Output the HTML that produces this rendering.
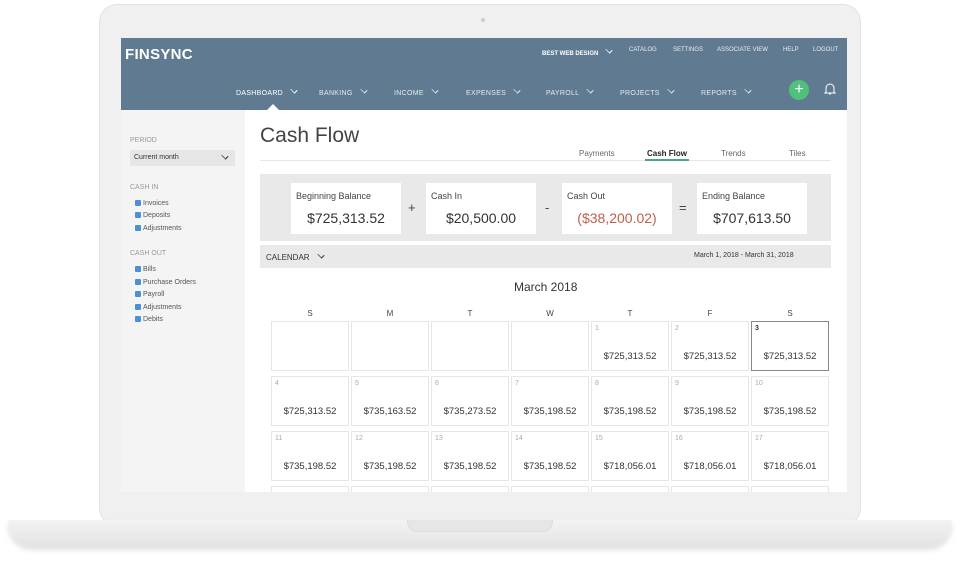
<!DOCTYPE html>
<html><head><style>
*{margin:0;padding:0;box-sizing:border-box}
body{width:960px;height:574px;background:#fff;position:relative;overflow:hidden;font-family:"Liberation Sans",sans-serif;color:#333}
.abs{position:absolute}
.lid{left:99px;top:4px;width:762px;height:522px;background:#f0f0f0;border:1px solid #e2e2e2;border-radius:18px}
.base{left:8px;top:520px;width:944px;height:26px;background:linear-gradient(#f3f3f3,#e4e4e4);border-radius:3px 3px 40px 40px;box-shadow:0 4px 6px rgba(0,0,0,.12)}
.notch{left:407px;top:520px;width:146px;height:12px;background:#e6e6e6;border-radius:0 0 10px 10px;border:1px solid #ddd;border-top:none}
.screen{left:121px;top:38px;width:726px;height:454px;background:#fff;overflow:hidden}
.hdr{left:0;top:0;width:726px;height:72px;background:#607b91;color:#fff}
.logo{left:4px;top:8px;font-weight:bold;font-size:15px;letter-spacing:.3px}
.top{top:9px;font-size:6px;color:#e8eef3}
.nav{top:49px;font-size:7px;color:#e3eaf0;letter-spacing:.3px}
.ch{display:inline-block;width:6px;height:6px;border-right:1px solid currentColor;border-bottom:1px solid currentColor;transform:rotate(45deg) scaleY(.7);margin-left:8px;vertical-align:2px}
.side{left:0;top:72px;width:124px;height:382px;background:#f4f4f4}
.sl{font-size:7px;color:#999}
.cb{font-size:7px;color:#555;left:14px}
.cb:before{content:"";display:inline-block;width:6px;height:6px;background:#4a90d9;border-radius:1px;margin-right:2px;vertical-align:-1px}
.box{background:#fff;height:51px;top:145px}
.box .t{position:absolute;left:5px;top:8px;font-size:9px;color:#444}
.box .v{position:absolute;left:0;right:0;top:27px;text-align:center;font-size:14px;color:#333}
.op{top:162px;font-size:13px;color:#444}
.cell{width:78px;height:50px;border:1px solid #e6e6e6;background:#fff}
.cell .d{position:absolute;left:3px;top:3px;font-size:7px;color:#aaa}
.cell .a{position:absolute;left:0;right:0;top:29px;text-align:center;font-size:9.5px;color:#333}
.dow{top:271px;width:78px;text-align:center;font-size:8px;color:#444}
</style></head><body>
<div class="abs lid"></div>
<div class="abs" style="left:481px;top:18px;width:4px;height:4px;border-radius:2px;background:#ccc"></div>
<div class="abs base"></div>
<div class="abs notch"></div>
<div class="abs screen">
 <div class="abs hdr">
  <div class="abs logo">FINSYNC</div>
  <div class="abs top" style="left:421px;font-weight:bold;color:#fff">BEST WEB DESIGN<span class="ch"></span></div>
  <div class="abs top" style="left:508px">CATALOG</div>
  <div class="abs top" style="left:552px">SETTINGS</div>
  <div class="abs top" style="left:596px">ASSOCIATE VIEW</div>
  <div class="abs top" style="left:662px">HELP</div>
  <div class="abs top" style="left:692px">LOGOUT</div>
  <div class="abs nav" style="left:115px;color:#fff">DASHBOARD<span class="ch"></span></div>
  <div class="abs nav" style="left:198px">BANKING<span class="ch"></span></div>
  <div class="abs nav" style="left:273px">INCOME<span class="ch"></span></div>
  <div class="abs nav" style="left:345px">EXPENSES<span class="ch"></span></div>
  <div class="abs nav" style="left:425px">PAYROLL<span class="ch"></span></div>
  <div class="abs nav" style="left:499px">PROJECTS<span class="ch"></span></div>
  <div class="abs nav" style="left:580px">REPORTS<span class="ch"></span></div>
  <div class="abs" style="left:668px;top:42px;width:20px;height:20px;border-radius:10px;background:#4fc17a;color:#fff;font-size:16px;line-height:19px;text-align:center">+</div>
  <svg class="abs" style="left:703px;top:44px" width="12" height="14" viewBox="0 0 12 14"><path d="M2 10 V6 a4 4 0 0 1 8 0 V10 L11 11 H1 Z M5 12 h2" fill="none" stroke="#fff" stroke-width="1"/></svg>
  <div class="abs" style="left:146px;top:66px;width:0;height:0;border-left:6px solid transparent;border-right:6px solid transparent;border-bottom:6px solid #fff"></div>
 </div>
 <div class="abs side">
  <div class="abs sl" style="left:9px;top:27px">PERIOD</div>
  <div class="abs" style="left:9px;top:40px;width:105px;height:16px;background:#e6e6e6;font-size:7px;padding:4px 4px;color:#333">Current month<span class="ch" style="float:right;margin-right:3px;margin-top:-1px"></span></div>
  <div class="abs sl" style="left:9px;top:74px">CASH IN</div>
  <div class="abs cb" style="top:90px">Invoices</div>
  <div class="abs cb" style="top:102px">Deposits</div>
  <div class="abs cb" style="top:115px">Adjustments</div>
  <div class="abs sl" style="left:9px;top:140px">CASH OUT</div>
  <div class="abs cb" style="top:156px">Bills</div>
  <div class="abs cb" style="top:169px">Purchase Orders</div>
  <div class="abs cb" style="top:181px">Payroll</div>
  <div class="abs cb" style="top:194px">Adjustments</div>
  <div class="abs cb" style="top:206px">Debits</div>
 </div>
 <div class="abs" style="left:139px;top:86px;font-size:21px;color:#444">Cash Flow</div>
 <div class="abs" style="left:139px;top:122px;width:571px;height:1px;background:#e6e6e6"></div>
 <div class="abs" style="left:458px;top:111px;font-size:8px;color:#666">Payments</div>
 <div class="abs" style="left:526px;top:111px;font-size:8px;color:#222;font-weight:bold">Cash Flow</div>
 <div class="abs" style="left:524px;top:121px;width:44px;height:2px;background:#4fa67a"></div>
 <div class="abs" style="left:600px;top:111px;font-size:8px;color:#666">Trends</div>
 <div class="abs" style="left:668px;top:111px;font-size:8px;color:#666">Tiles</div>
 <div class="abs" style="left:139px;top:136px;width:571px;height:67px;background:#e9e9e9"></div>
 <div class="abs box" style="left:170px;width:110px"><span class="t">Beginning Balance</span><span class="v">$725,313.52</span></div>
 <div class="abs op" style="left:287px">+</div>
 <div class="abs box" style="left:305px;width:110px"><span class="t">Cash In</span><span class="v">$20,500.00</span></div>
 <div class="abs op" style="left:424px">-</div>
 <div class="abs box" style="left:441px;width:110px"><span class="t">Cash Out</span><span class="v" style="color:#c0604a">($38,200.02)</span></div>
 <div class="abs op" style="left:558px">=</div>
 <div class="abs box" style="left:576px;width:110px"><span class="t">Ending Balance</span><span class="v">$707,613.50</span></div>
 <div class="abs" style="left:139px;top:207px;width:571px;height:23px;background:#e9e9e9"></div>
 <div class="abs" style="left:145px;top:214px;font-size:8px;color:#333">CALENDAR<span class="ch"></span></div>
 <div class="abs" style="left:573px;top:214px;font-size:7px;color:#333">March 1, 2018 - March 31, 2018</div>
 <div class="abs" style="left:393px;top:242px;font-size:12px;color:#333">March 2018</div>
 <div class="abs dow" style="left:150px">S</div><div class="abs dow" style="left:230px">M</div><div class="abs dow" style="left:310px">T</div><div class="abs dow" style="left:390px">W</div><div class="abs dow" style="left:470px">T</div><div class="abs dow" style="left:550px">F</div><div class="abs dow" style="left:630px">S</div>
 <div class="abs cell" style="left:150px;top:283px"></div>
 <div class="abs cell" style="left:230px;top:283px"></div>
 <div class="abs cell" style="left:310px;top:283px"></div>
 <div class="abs cell" style="left:390px;top:283px"></div>
 <div class="abs cell" style="left:470px;top:283px"><span class="d">1</span><span class="a">$725,313.52</span></div>
 <div class="abs cell" style="left:550px;top:283px"><span class="d">2</span><span class="a">$725,313.52</span></div>
 <div class="abs cell" style="left:630px;top:283px;border:1px solid #888"><span class="d" style="color:#333;font-weight:bold">3</span><span class="a">$725,313.52</span></div>
 <div class="abs cell" style="left:150px;top:338px"><span class="d">4</span><span class="a">$725,313.52</span></div>
 <div class="abs cell" style="left:230px;top:338px"><span class="d">5</span><span class="a">$735,163.52</span></div>
 <div class="abs cell" style="left:310px;top:338px"><span class="d">6</span><span class="a">$735,273.52</span></div>
 <div class="abs cell" style="left:390px;top:338px"><span class="d">7</span><span class="a">$735,198.52</span></div>
 <div class="abs cell" style="left:470px;top:338px"><span class="d">8</span><span class="a">$735,198.52</span></div>
 <div class="abs cell" style="left:550px;top:338px"><span class="d">9</span><span class="a">$735,198.52</span></div>
 <div class="abs cell" style="left:630px;top:338px"><span class="d">10</span><span class="a">$735,198.52</span></div>
 <div class="abs cell" style="left:150px;top:393px"><span class="d">11</span><span class="a">$735,198.52</span></div>
 <div class="abs cell" style="left:230px;top:393px"><span class="d">12</span><span class="a">$735,198.52</span></div>
 <div class="abs cell" style="left:310px;top:393px"><span class="d">13</span><span class="a">$735,198.52</span></div>
 <div class="abs cell" style="left:390px;top:393px"><span class="d">14</span><span class="a">$735,198.52</span></div>
 <div class="abs cell" style="left:470px;top:393px"><span class="d">15</span><span class="a">$718,056.01</span></div>
 <div class="abs cell" style="left:550px;top:393px"><span class="d">16</span><span class="a">$718,056.01</span></div>
 <div class="abs cell" style="left:630px;top:393px"><span class="d">17</span><span class="a">$718,056.01</span></div>
 <div class="abs cell" style="left:150px;top:448px"></div><div class="abs cell" style="left:230px;top:448px"></div><div class="abs cell" style="left:310px;top:448px"></div><div class="abs cell" style="left:390px;top:448px"></div><div class="abs cell" style="left:470px;top:448px"></div><div class="abs cell" style="left:550px;top:448px"></div><div class="abs cell" style="left:630px;top:448px"></div>
</div>
</body></html>
